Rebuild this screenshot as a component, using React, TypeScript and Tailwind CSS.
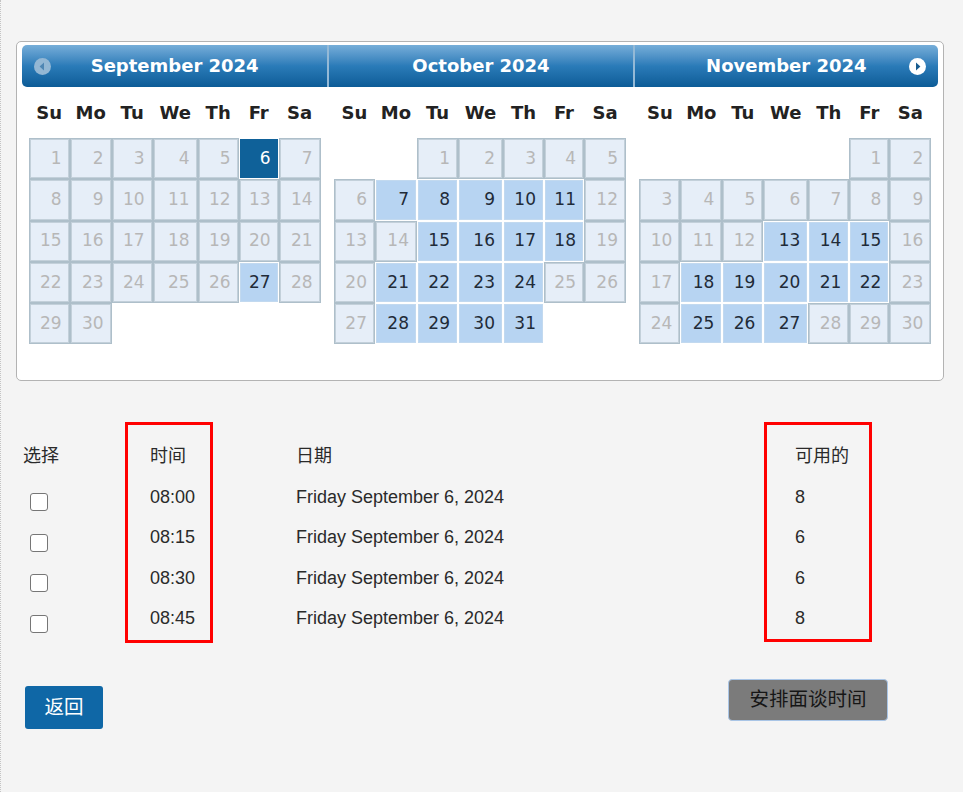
import React from "react";

type S = "sel" | "avail" | "dis";
type Cell = null | { d: number; s: S };

function buildMonth(firstDow: number, days: number, avail: number[], sel?: number): Cell[][] {
  const cells: Cell[] = [];
  for (let i = 0; i < firstDow; i++) cells.push(null);
  for (let d = 1; d <= days; d++) cells.push({ d, s: d === sel ? "sel" : avail.includes(d) ? "avail" : "dis" });
  while (cells.length % 7) cells.push(null);
  const weeks: Cell[][] = [];
  for (let i = 0; i < cells.length; i += 7) weeks.push(cells.slice(i, i + 7));
  return weeks;
}

const months = [
  { title: "September 2024", weeks: buildMonth(0, 30, [27], 6) },
  {
    title: "October 2024",
    weeks: buildMonth(2, 31, [7, 8, 9, 10, 11, 15, 16, 17, 18, 21, 22, 23, 24, 28, 29, 30, 31]),
  },
  { title: "November 2024", weeks: buildMonth(5, 30, [13, 14, 15, 18, 19, 20, 21, 22, 25, 26, 27]) },
];

const dayNames = ["Su", "Mo", "Tu", "We", "Th", "Fr", "Sa"];
const colWidths = [41, 42, 41, 45, 41, 40, 42];

function DayCell({ c }: { c: Cell }) {
  if (!c) return <td className="p-0" />;
  if (c.s === "dis") {
    return (
      <td className="p-px bg-[#aebfca]">
        <div className="h-[39.3px] border border-[#c3d0da] bg-[#e6eef8] text-[#b7b7b7] flex items-center justify-end pr-[6px]">
          {c.d}
        </div>
      </td>
    );
  }
  if (c.s === "sel") {
    return (
      <td className="p-px">
        <div className="h-[39.3px] border border-[#0f6199] bg-[#0f6199] text-white flex items-center justify-end pr-[6px]">
          {c.d}
        </div>
      </td>
    );
  }
  return (
    <td className="p-px">
      <div className="h-[39.3px] border border-[#c2d9ef] bg-[#b7d4f2] text-[#1f2b38] flex items-center justify-end pr-[6px]">
        {c.d}
      </div>
    </td>
  );
}

function PrevIcon() {
  return (
    <svg width="17" height="17" viewBox="0 0 17 17">
      <circle cx="8.5" cy="8.5" r="8.5" fill="#93b7d4" />
      <path d="M10 4.6 L5.6 8.5 L10 12.4 Z" fill="#4f86b3" />
    </svg>
  );
}

function NextIcon() {
  return (
    <svg width="17" height="17" viewBox="0 0 17 17">
      <circle cx="8.5" cy="8.5" r="8.5" fill="#ffffff" />
      <path d="M7 4.6 L11.4 8.5 L7 12.4 Z" fill="#175b8f" />
    </svg>
  );
}

function MonthGroup({ idx }: { idx: number }) {
  const m = months[idx];
  const rounded = idx === 0 ? "rounded-l-[5px]" : idx === 2 ? "rounded-r-[5px]" : "";
  const divider = idx > 0 ? "border-l-2 border-l-[#94b9d6]" : "";
  return (
    <div className="flex-1 flex flex-col">
      <div
        className={`relative h-[42px] flex items-center justify-center bg-gradient-to-b from-[#76aed9] via-[#2a7bb8] to-[#0c5c97] ${rounded} ${divider}`}
      >
        {idx === 0 && (
          <span className="absolute left-[12px] top-[13px] flex">
            <PrevIcon />
          </span>
        )}
        <span className="text-white font-bold text-[18px] leading-none">{m.title}</span>
        {idx === 2 && (
          <span className="absolute right-[12px] top-[13px] flex">
            <NextIcon />
          </span>
        )}
      </div>
      <table className="mx-auto table-fixed border-separate border-spacing-0 w-[292px] text-[17px]">
        <colgroup>
          {colWidths.map((w, i) => (
            <col key={i} style={{ width: w }} />
          ))}
        </colgroup>
        <thead>
          <tr>
            {dayNames.map((d) => (
              <th key={d} className="h-[51px] p-0 text-center font-bold text-[18px] text-[#222]">
                {d}
              </th>
            ))}
          </tr>
        </thead>
        <tbody>
          {m.weeks.map((w, wi) => (
            <tr key={wi}>
              {w.map((c, ci) => (
                <DayCell key={ci} c={c} />
              ))}
            </tr>
          ))}
        </tbody>
      </table>
    </div>
  );
}

const rows = [
  { t: "08:00", n: "8" },
  { t: "08:15", n: "6" },
  { t: "08:30", n: "6" },
  { t: "08:45", n: "8" },
];
const dateText = "Friday September 6, 2024";

export default function App() {
  return (
    <div className="min-h-[792px] bg-[#f4f4f4] border-l border-dotted border-l-[#c4c4c4] pt-[41px]">
      <div
        className="ml-[15px] w-[928px] bg-white border border-[#b3b3b3] rounded-[5px] px-[5px] pt-[3px] pb-[36px] flex"
        style={{ fontFamily: "'DejaVu Sans', Verdana, sans-serif" }}
      >
        <MonthGroup idx={0} />
        <MonthGroup idx={1} />
        <MonthGroup idx={2} />
      </div>

      <div
        className="mt-[41px] pl-[22px] flex items-start text-[18px] text-[#2a2a2a]"
        style={{ fontFamily: "'Liberation Sans', 'Noto Sans CJK SC', sans-serif" }}
      >
        <div className="w-[102px] pt-[14px] flex flex-col">
          <div className="h-[40.5px] flex items-center">选择</div>
          {rows.map((r) => (
            <div key={r.t} className="h-[40.5px] flex items-center pl-[7px]">
              <span className="mt-[10px] w-[18px] h-[18px] border-[1.5px] border-[#767676] rounded-[3px] bg-white" />
            </div>
          ))}
        </div>
        <div className="w-[88px] border-[3px] border-[#ff0000] pl-[22px] pt-[11px] pb-[1px] flex flex-col">
          <div className="h-[40.5px] flex items-center">时间</div>
          {rows.map((r) => (
            <div key={r.t} className="h-[40.5px] flex items-center">
              {r.t}
            </div>
          ))}
        </div>
        <div className="w-[551px] pl-[83px] pt-[14px] flex flex-col">
          <div className="h-[40.5px] flex items-center">日期</div>
          {rows.map((r) => (
            <div key={r.t} className="h-[40.5px] flex items-center">
              {dateText}
            </div>
          ))}
        </div>
        <div className="w-[108px] border-[3px] border-[#ff0000] pl-[28px] pt-[11px] flex flex-col">
          <div className="h-[40.5px] flex items-center">可用的</div>
          {rows.map((r) => (
            <div key={r.t} className="h-[40.5px] flex items-center">
              {r.n}
            </div>
          ))}
        </div>
      </div>

      <div
        className="mt-[36px] pl-[24px] w-[887px] flex items-start justify-between text-[19.5px]"
        style={{ fontFamily: "'Liberation Sans', 'Noto Sans CJK SC', sans-serif" }}
      >
        <button className="mt-[7px] w-[78px] h-[43px] rounded-[3px] bg-[#0f67a6] text-white flex items-center justify-center">
          返回
        </button>
        <button className="w-[160px] h-[42px] rounded-[4px] bg-[#7b7b7b] border border-[#a9c5e6] text-[#161616] flex items-center justify-center">
          安排面谈时间
        </button>
      </div>
    </div>
  );
}
